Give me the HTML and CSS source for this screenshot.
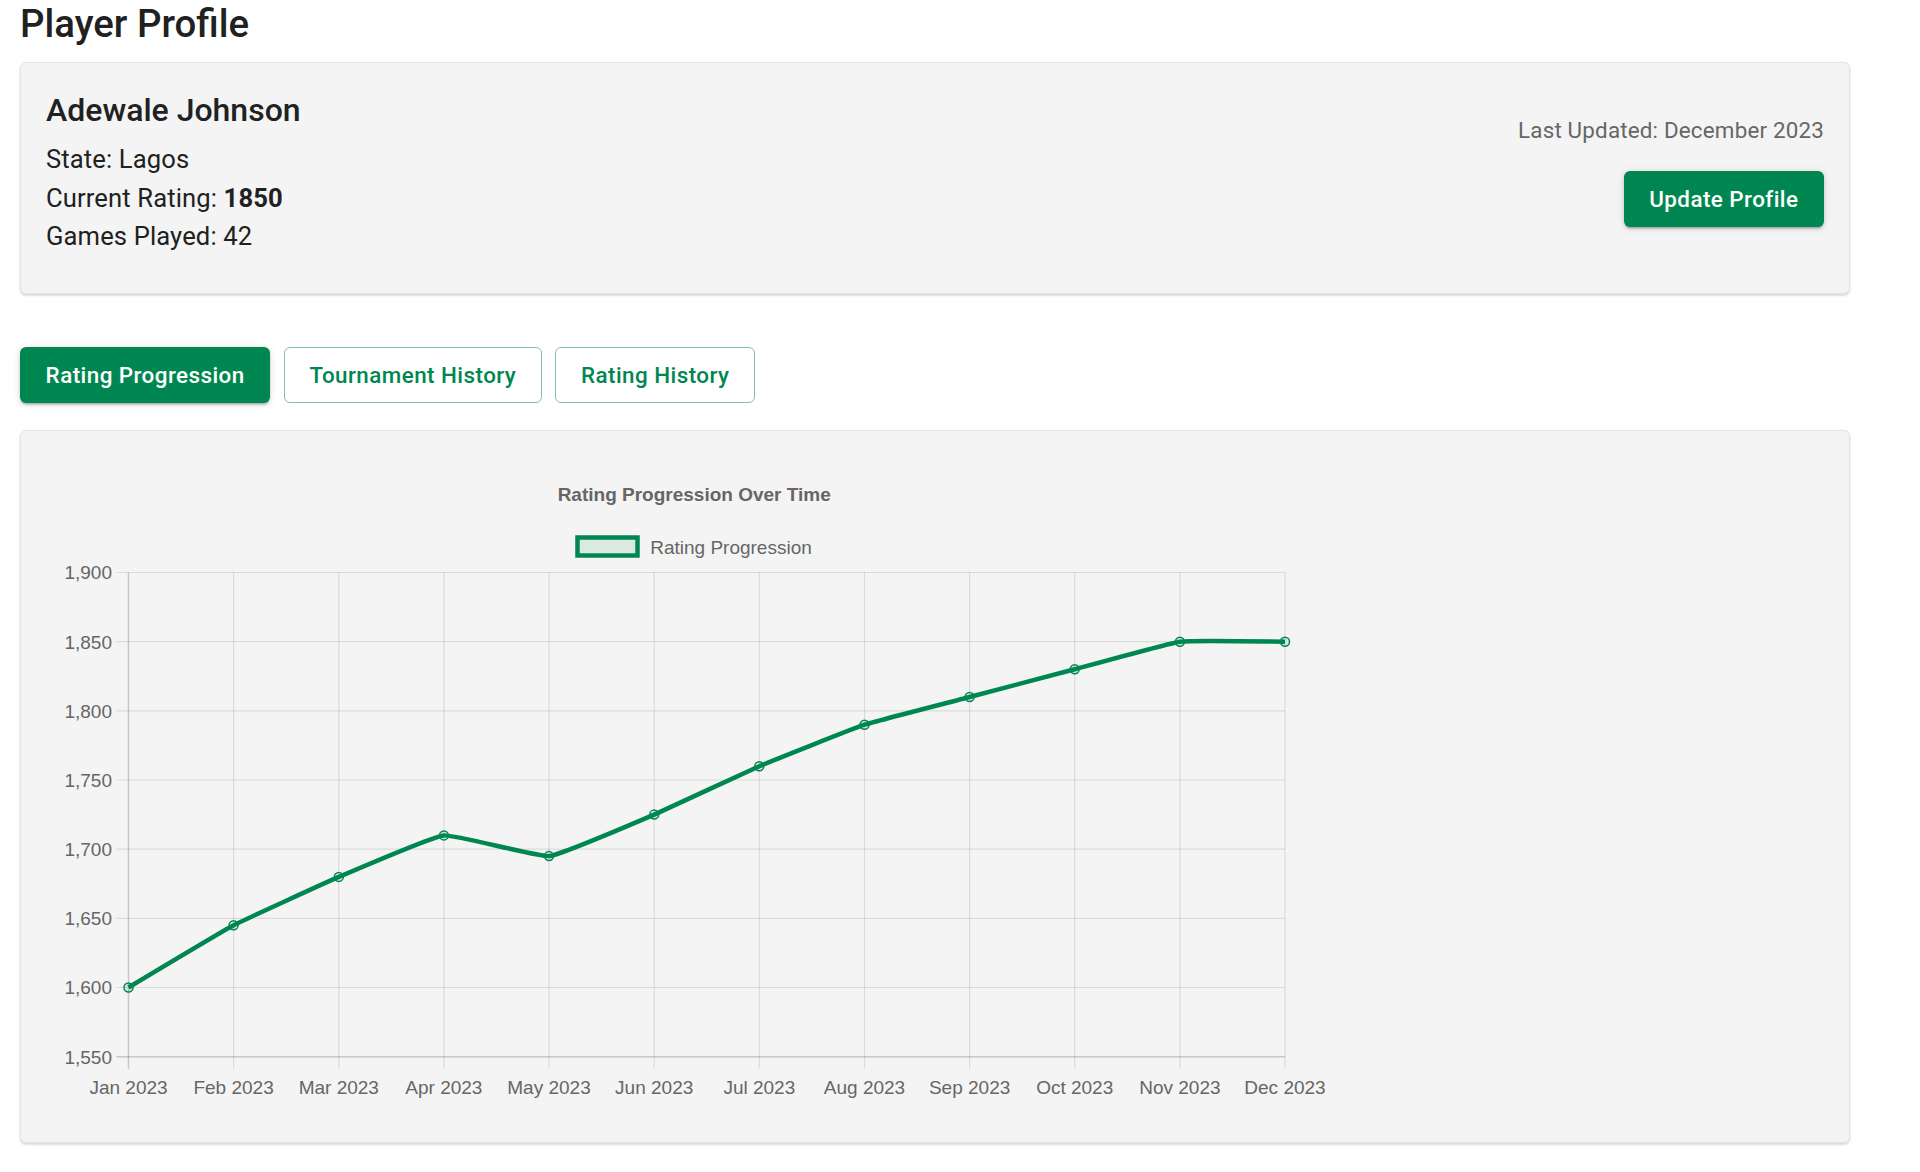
FILE: index.html
```html
<!DOCTYPE html>
<html lang="en">
<head>
<meta charset="utf-8">
<title>Player Profile</title>
<link rel="stylesheet" href="styles.css">
</head>
<body>
<div class="page">
  <h1 class="page-title">Player Profile</h1>

  <section class="card profile-card">
    <div class="profile-info">
      <h2 class="player-name">Adewale Johnson</h2>
      <p class="info-line">State: Lagos</p>
      <p class="info-line">Current Rating: <strong>1850</strong></p>
      <p class="info-line">Games Played: 42</p>
    </div>
    <div class="profile-side">
      <p class="last-updated">Last Updated: December 2023</p>
      <button class="btn btn-contained">Update Profile</button>
    </div>
  </section>

  <nav class="tabs">
    <button class="btn btn-contained">Rating Progression</button>
    <button class="btn btn-outlined">Tournament History</button>
    <button class="btn btn-outlined">Rating History</button>
  </nav>

  <section class="card chart-card">
    <svg class="chart" width="1296" height="660" viewBox="0 0 1296 660">
      <text class="chart-title" x="648.2" y="45" text-anchor="middle">Rating Progression Over Time</text>
      <rect class="legend-box" x="531.5" y="81.5" width="60" height="18"/>
      <text class="legend-label" x="604.2" y="97.6">Rating Progression</text>

      <g class="grid">
        <line x1="70.5" y1="116.5" x2="1239" y2="116.5"/>
        <line x1="70.5" y1="185.7" x2="1239" y2="185.7"/>
        <line x1="70.5" y1="254.8" x2="1239" y2="254.8"/>
        <line x1="70.5" y1="324.0" x2="1239" y2="324.0"/>
        <line x1="70.5" y1="393.2" x2="1239" y2="393.2"/>
        <line x1="70.5" y1="462.3" x2="1239" y2="462.3"/>
        <line x1="70.5" y1="531.5" x2="1239" y2="531.5"/>
        <line x1="187.6" y1="116.5" x2="187.6" y2="612.7"/>
        <line x1="292.8" y1="116.5" x2="292.8" y2="612.7"/>
        <line x1="397.9" y1="116.5" x2="397.9" y2="612.7"/>
        <line x1="503.0" y1="116.5" x2="503.0" y2="612.7"/>
        <line x1="608.2" y1="116.5" x2="608.2" y2="612.7"/>
        <line x1="713.3" y1="116.5" x2="713.3" y2="612.7"/>
        <line x1="818.5" y1="116.5" x2="818.5" y2="612.7"/>
        <line x1="923.6" y1="116.5" x2="923.6" y2="612.7"/>
        <line x1="1028.7" y1="116.5" x2="1028.7" y2="612.7"/>
        <line x1="1133.9" y1="116.5" x2="1133.9" y2="612.7"/>
        <line x1="1239.0" y1="116.5" x2="1239.0" y2="612.7"/>
      </g>
      <g class="axis">
        <line x1="70.5" y1="600.7" x2="1239" y2="600.7"/>
        <line x1="82.5" y1="116.5" x2="82.5" y2="612.7"/>
      </g>

      <g class="tick-label" text-anchor="end">
        <text x="66" y="123.3">1,900</text>
        <text x="66" y="192.5">1,850</text>
        <text x="66" y="261.6">1,800</text>
        <text x="66" y="330.8">1,750</text>
        <text x="66" y="400.0">1,700</text>
        <text x="66" y="469.1">1,650</text>
        <text x="66" y="538.3">1,600</text>
        <text x="66" y="607.5">1,550</text>
      </g>
      <g class="tick-label" text-anchor="middle">
        <text x="82.5" y="637.5">Jan 2023</text>
        <text x="187.6" y="637.5">Feb 2023</text>
        <text x="292.8" y="637.5">Mar 2023</text>
        <text x="397.9" y="637.5">Apr 2023</text>
        <text x="503.0" y="637.5">May 2023</text>
        <text x="608.2" y="637.5">Jun 2023</text>
        <text x="713.3" y="637.5">Jul 2023</text>
        <text x="818.5" y="637.5">Aug 2023</text>
        <text x="923.6" y="637.5">Sep 2023</text>
        <text x="1028.7" y="637.5">Oct 2023</text>
        <text x="1133.9" y="637.5">Nov 2023</text>
        <text x="1239.0" y="637.5">Dec 2023</text>
      </g>

      <path class="series" d="M82.5,531.5 C82.5,531.5 177.1,474.8 187.6,469.3 C198.1,463.8 282.3,425.4 292.8,420.9 C303.3,416.4 387.4,380.4 397.9,379.4 C408.4,378.4 492.5,401.1 503.0,400.1 C513.5,399.1 597.7,363.1 608.2,358.6 C618.7,354.1 702.8,314.7 713.3,310.2 C723.8,305.7 808.0,272.2 818.5,268.7 C829.0,265.2 913.1,243.8 923.6,241.0 C934.1,238.2 1018.2,216.1 1028.7,213.3 C1039.2,210.5 1123.4,187.1 1133.9,185.7 C1144.4,184.3 1239,185.7 1239,185.7"/>
      <g class="points">
        <circle cx="82.5" cy="531.5" r="4.5"/>
        <circle cx="187.6" cy="469.3" r="4.5"/>
        <circle cx="292.8" cy="420.9" r="4.5"/>
        <circle cx="397.9" cy="379.4" r="4.5"/>
        <circle cx="503.0" cy="400.1" r="4.5"/>
        <circle cx="608.2" cy="358.6" r="4.5"/>
        <circle cx="713.3" cy="310.2" r="4.5"/>
        <circle cx="818.5" cy="268.7" r="4.5"/>
        <circle cx="923.6" cy="241.0" r="4.5"/>
        <circle cx="1028.7" cy="213.3" r="4.5"/>
        <circle cx="1133.9" cy="185.7" r="4.5"/>
        <circle cx="1239.0" cy="185.7" r="4.5"/>
      </g>
    </svg>
  </section>
</div>
</body>
</html>
```

FILE: styles.css
```css
html, body {
  margin: 0;
  padding: 0;
  background: #ffffff;
}

body {
  font-family: "Roboto", "Liberation Sans", sans-serif;
  color: rgba(0, 0, 0, 0.87);
}

.page {
  width: 1830px;
  padding: 0 20px 40px 20px;
}

.page-title {
  margin: 0 0 14px 0;
  font-size: 38.4px;
  font-weight: 500;
  line-height: 48px;
  color: #212121;
}

.card {
  background: #f4f4f4;
  border: 1px solid #e3e3e3;
  border-radius: 6px;
  box-shadow: 0 2px 2px rgba(0, 0, 0, 0.10), 0 1px 4px rgba(0, 0, 0, 0.06);
  box-sizing: border-box;
}

.profile-card {
  display: flex;
  justify-content: space-between;
  align-items: center;
  padding: 22px 25px 38px 25px;
}

.player-name {
  margin: 0 0 4px 0;
  font-size: 32px;
  font-weight: 500;
  line-height: 51.2px;
  color: #212121;
}

.info-line {
  margin: 0;
  font-size: 25.6px;
  line-height: 38.4px;
  letter-spacing: 0.12px;
  color: #212121;
}

.info-line strong {
  font-weight: 700;
}

.profile-side {
  display: flex;
  flex-direction: column;
  align-items: flex-end;
  gap: 25px;
}

.last-updated {
  margin: 0;
  font-size: 22.4px;
  line-height: 32px;
  letter-spacing: 0.18px;
  color: #666666;
}

.btn {
  font-family: "Roboto", "Liberation Sans", sans-serif;
  font-size: 22.4px;
  font-weight: 500;
  letter-spacing: 0.45px;
  line-height: 36px;
  border-radius: 6px;
  padding: 10px 25.6px;
  cursor: pointer;
  box-sizing: border-box;
  height: 56px;
}

.btn-contained {
  background: #008751;
  color: #ffffff;
  border: none;
  box-shadow: 0 3px 2px -2px rgba(0, 0, 0, 0.2), 0 2px 3px 0 rgba(0, 0, 0, 0.14), 0 1px 8px 0 rgba(0, 0, 0, 0.12);
}

.btn-outlined {
  background: transparent;
  color: #008751;
  border: 1px solid rgba(0, 135, 81, 0.5);
  padding: 9px 24.6px;
}

.tabs {
  display: flex;
  gap: 13.5px;
  margin: 53px 0 27px 0;
}

.chart-card {
  padding: 25px;
  height: 713px;
}

.chart {
  display: block;
  font-family: "Liberation Sans", Arial, sans-serif;
}

.chart-title {
  font-size: 19px;
  font-weight: 700;
  fill: #666666;
}

.legend-box {
  fill: rgba(0, 135, 81, 0.1);
  stroke: #008751;
  stroke-width: 4.5;
}

.legend-label {
  font-size: 19px;
  fill: #666666;
}

.grid line {
  stroke: rgba(0, 0, 0, 0.1);
  stroke-width: 1.2;
}

.axis line {
  stroke: rgba(0, 0, 0, 0.18);
  stroke-width: 1.5;
}

.tick-label {
  font-size: 19px;
  fill: #666666;
}

.series {
  fill: none;
  stroke: #008751;
  stroke-width: 4.5;
  stroke-linejoin: round;
}

.points circle {
  fill: rgba(0, 135, 81, 0.1);
  stroke: #008751;
  stroke-width: 1.5;
}
```
